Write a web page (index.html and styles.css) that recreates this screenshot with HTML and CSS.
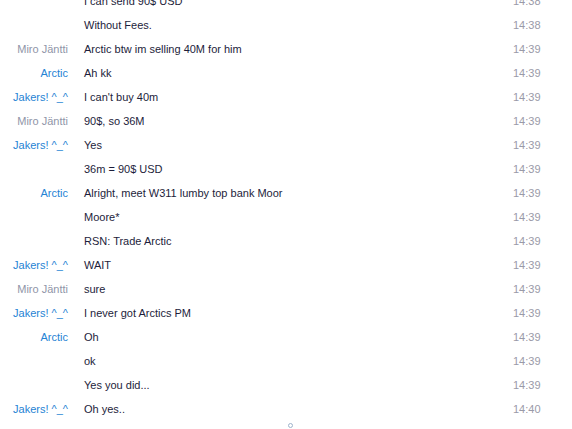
FILE: index.html
```html
<!DOCTYPE html>
<html lang="en">
<head>
    <meta charset="UTF-8">
    <title>Chat</title>
    <link rel="stylesheet" href="styles.css">
</head>
<body>
    <div class="chat">
        <div class="row"><span class="name"></span><span class="text">I can send 90$ USD</span><span class="time">14:38</span></div>
        <div class="row"><span class="name"></span><span class="text">Without Fees.</span><span class="time">14:38</span></div>
        <div class="row"><span class="name grey">Miro Jäntti</span><span class="text">Arctic btw im selling 40M for him</span><span class="time">14:39</span></div>
        <div class="row"><span class="name">Arctic</span><span class="text">Ah kk</span><span class="time">14:39</span></div>
        <div class="row"><span class="name">Jakers! ^_^</span><span class="text">I can't buy 40m</span><span class="time">14:39</span></div>
        <div class="row"><span class="name grey">Miro Jäntti</span><span class="text">90$, so 36M</span><span class="time">14:39</span></div>
        <div class="row"><span class="name">Jakers! ^_^</span><span class="text">Yes</span><span class="time">14:39</span></div>
        <div class="row"><span class="name"></span><span class="text">36m = 90$ USD</span><span class="time">14:39</span></div>
        <div class="row"><span class="name">Arctic</span><span class="text">Alright, meet W311 lumby top bank Moor</span><span class="time">14:39</span></div>
        <div class="row"><span class="name"></span><span class="text">Moore*</span><span class="time">14:39</span></div>
        <div class="row"><span class="name"></span><span class="text">RSN: Trade Arctic</span><span class="time">14:39</span></div>
        <div class="row"><span class="name">Jakers! ^_^</span><span class="text">WAIT</span><span class="time">14:39</span></div>
        <div class="row"><span class="name grey">Miro Jäntti</span><span class="text">sure</span><span class="time">14:39</span></div>
        <div class="row"><span class="name">Jakers! ^_^</span><span class="text">I never got Arctics PM</span><span class="time">14:39</span></div>
        <div class="row"><span class="name">Arctic</span><span class="text">Oh</span><span class="time">14:39</span></div>
        <div class="row"><span class="name"></span><span class="text">ok</span><span class="time">14:39</span></div>
        <div class="row"><span class="name"></span><span class="text">Yes you did...</span><span class="time">14:39</span></div>
        <div class="row"><span class="name">Jakers! ^_^</span><span class="text">Oh yes..</span><span class="time">14:40</span></div>
    </div>
    <div class="typing"></div>
</body>
</html>
```

FILE: styles.css
```css
* {
    margin: 0;
    padding: 0;
    box-sizing: border-box;
}

body {
    font-family: 'Liberation Sans', Arial, sans-serif;
    font-size: 11px;
    background: #ffffff;
    color: #1d1d3b;
    overflow: hidden;
}

.chat {
    margin-top: -11px;
}

.row {
    display: grid;
    grid-template-columns: 68px 1fr 59px;
    column-gap: 16px;
    height: 24px;
    align-items: center;
    white-space: nowrap;
}

.name {
    text-align: right;
    color: #2683d4;
}

.name.grey {
    color: #9095a8;
}

.time {
    color: #9a9aa8;
}

.typing {
    width: 5px;
    height: 5px;
    margin: 2px 0 0 288px;
    border: 1px solid #9fb4cc;
    border-radius: 50%;
}
```
